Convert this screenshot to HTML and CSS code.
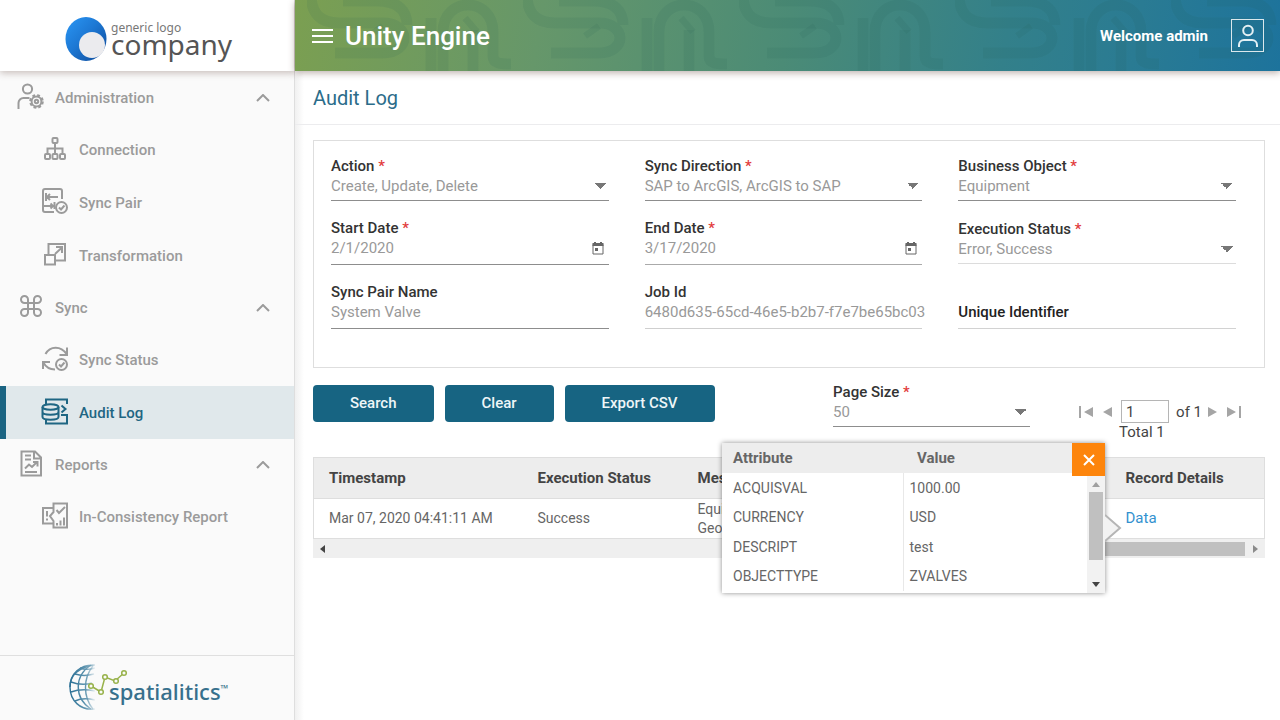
FILE: index.html
```html
<!DOCTYPE html>
<html lang="en">
<head>
<meta charset="utf-8">
<title>Unity Engine - Audit Log</title>
<link rel="stylesheet" href="styles.css">
</head>
<body>
<div class="app">
  <aside class="sidebar">
    <div class="brand">
      <svg class="brand-mark" viewBox="0 0 42 46" aria-hidden="true">
        <defs>
          <linearGradient id="orb" x1="0" y1="0" x2="1" y2="1">
            <stop offset="0" stop-color="#2a97f5"/><stop offset=".45" stop-color="#1d78d4"/><stop offset="1" stop-color="#0d4795"/>
          </linearGradient>
        </defs>
        <ellipse cx="21" cy="22" rx="20.500" ry="22" fill="url(#orb)"/>
        <circle cx="27" cy="28" r="13" fill="#ebebee"/>
      </svg>
      <div class="brand-text"><span class="brand-small">generic logo</span><span class="brand-big">company</span></div>
    </div>

    <nav class="nav">
      <button class="nav-head" type="button" aria-expanded="true">
        <svg class="icon" viewBox="0 0 28 28" aria-hidden="true"><circle cx="10.500" cy="5" r="4.600"/><path d="M1.500 25V19a5 5 0 0 1 5-5h6"/><circle cx="19.500" cy="17.500" r="6" stroke-width="2.600" stroke-dasharray="2.700 2"/><circle cx="19.500" cy="17.500" r="4.900"/><circle cx="19.500" cy="17.500" r="1.700"/></svg>
        <span>Administration</span>
        <svg class="chevron" viewBox="0 0 14 8" aria-hidden="true"><path d="M1 7l6-6 6 6"/></svg>
      </button>
      <a class="nav-item" href="#">
        <svg class="icon" viewBox="0 0 28 28" aria-hidden="true"><rect x="11.500" y="2" width="5" height="5" rx="1"/><rect x="4" y="18" width="5" height="5" rx="1"/><rect x="11.500" y="18" width="5" height="5" rx="1"/><rect x="19" y="18" width="5" height="5" rx="1"/><path d="M14 7v11M6.500 18v-5.500h15V18"/></svg>
        <span>Connection</span>
      </a>
      <a class="nav-item" href="#">
        <svg class="icon" viewBox="0 0 28 28" aria-hidden="true"><path d="M13 23H4a2 2 0 0 1-2-2V2a2 2 0 0 1 2-2h15a2 2 0 0 1 2 2v8M5 4v8M6 8h11M9 5L6 8l3 3M2 17h10M9.500 14.500L12 17l-2.500 2.500M13.500 13v7"/><circle cx="20.500" cy="18.500" r="5.500"/><path d="M18 18.500l2 2 3.500-4"/></svg>
        <span>Sync Pair</span>
      </a>
      <a class="nav-item" href="#">
        <svg class="icon" viewBox="0 0 28 28" aria-hidden="true"><path d="M7.500 12V2H24v16.500H14M4 13h10v9.500H4zM14 12l7-6.500M15 5h6v6"/></svg>
        <span>Transformation</span>
      </a>
      <button class="nav-head" type="button" aria-expanded="true">
        <svg class="icon" viewBox="0 0 28 28" aria-hidden="true"><path d="M11 9V5.500A3.500 3.500 0 1 0 7.500 9h13A3.500 3.500 0 1 0 17 5.500v13a3.500 3.500 0 1 0 3.500-3.500h-13A3.500 3.500 0 1 0 11 18.500z"/></svg>
        <span>Sync</span>
        <svg class="chevron" viewBox="0 0 14 8" aria-hidden="true"><path d="M1 7l6-6 6 6"/></svg>
      </button>
      <a class="nav-item" href="#">
        <svg class="icon" viewBox="0 0 28 28" aria-hidden="true"><path d="M4.500 8C9-.500 20-.500 25.500 8M26 1.500V9h-7.500M2 23v-7h7M2 16c3 5.500 7 7.500 12 7.500"/><circle cx="20.500" cy="18.500" r="5.500"/><path d="M18 18.500l2 2 3.500-4"/></svg>
        <span>Sync Status</span>
      </a>
      <a class="nav-item nav-item-active" href="#" aria-current="page">
        <svg class="icon" viewBox="0 0 28 28" aria-hidden="true"><path d="M5 5V.500h21V5M5 20v4.500h21V16h-6M20.500 6.500l4 3.500-4 3.500"/><ellipse cx="9.500" cy="8" rx="8" ry="2.800"/><path d="M1.500 8v10c0 3.600 16 3.600 16 0V8M1.500 13c0 3.600 16 3.600 16 0"/></svg>
        <span>Audit Log</span>
      </a>
      <button class="nav-head" type="button" aria-expanded="true">
        <svg class="icon" viewBox="0 0 28 28" aria-hidden="true"><path d="M4.500 .500H18l6 6v18H4.500zM17 1v6.500h6.500M8 4.500h6M8 8.500h6M8 21h12M8 17.500l4-4 3 2.500 5-5M16 11h4.500v4.500"/></svg>
        <span>Reports</span>
        <svg class="chevron" viewBox="0 0 14 8" aria-hidden="true"><path d="M1 7l6-6 6 6"/></svg>
      </button>
      <a class="nav-item" href="#">
        <svg class="icon" viewBox="0 0 28 28" aria-hidden="true"><path d="M12.500 5H2v15.500h10.500M12.500 9V.500H26v24H12.500V18L9 13zM6 8v5.500M6 15.500v2M15.500 7l2.500 3 6-6M16 22.500v-2.500M19.500 22.500v-5M23 22.500v-8"/></svg>
        <span>In-Consistency Report</span>
      </a>
    </nav>

    <footer class="vendor">
      <svg class="vendor-mark" viewBox="0 0 62 50" aria-hidden="true">
        <defs>
          <linearGradient id="fade" gradientUnits="userSpaceOnUse" x1="2" y1="0" x2="29" y2="0"><stop offset="0" stop-color="#286e94"/><stop offset=".6" stop-color="#5d93ae"/><stop offset="1" stop-color="#5d93ae" stop-opacity="0"/></linearGradient>
        </defs>
        <g fill="none" stroke="url(#fade)" stroke-width="1.400">
          <path d="M28 2C13 1 3 11 3 24s10 24 25 22"/><path d="M3 24c0-12 9-20 25-22"/>
          <path d="M24 2C7 13 7 35 24 46"/><path d="M26 3c-10 12-10 31 0 43"/>
          <path d="M8 11c6 2 12 2 19 0M4 19c8 3 14 3 21 1M4 29c8-3 15-3 24-1M8 38c6-3 12-3 20-1M13 5c5 2 9 2 15 0"/>
        </g>
        <g fill="#fafafa" stroke="#98b24b" stroke-width="1.500"><path fill="none" d="M24 23l10 6 4-15 10 4 9-8"/><circle cx="24" cy="23" r="2.300"/><circle cx="34" cy="29" r="2.300"/><circle cx="38" cy="14" r="2.300"/><circle cx="49" cy="18" r="2.300"/><circle cx="57" cy="10" r="2.300"/></g>
      </svg>
      <span class="vendor-name">spatialitics<sup class="vendor-tm">™</sup></span>
    </footer>
  </aside>

  <div class="content">
    <header class="topbar">
      <svg class="topbar-art" aria-hidden="true">
        <defs>
          <pattern id="pipes" width="216" height="71" patternUnits="userSpaceOnUse" x="12">
            <g fill="none" stroke="#1d5a4c" stroke-opacity=".1" stroke-width="11">
              <path d="M4-6c0 20 10 29 28 29h44c28 0 28 30 0 30H28M36 1h34c22 0 30 10 30 24M124 18v56M136 74V32c0-36 50-36 50 0v24c0 8 8 8 18 8M166 30v44"/>
              <path d="M62 36l14-10M158 18l12 14" stroke-width="7"/>
            </g>
          </pattern>
        </defs>
        <rect width="100%" height="100%" fill="url(#pipes)"/>
      </svg>
      <button class="menu-button" type="button" aria-label="Toggle menu"><svg viewBox="0 0 22 16" aria-hidden="true"><path d="M0 2h21M0 8h21M0 14h21"/></svg></button>
      <h1 class="app-title">Unity Engine</h1>
      <span class="welcome">Welcome admin</span>
      <button class="user-button" type="button" aria-label="User account"><svg viewBox="0 0 22 24" aria-hidden="true"><circle cx="11" cy="6.500" r="4.800"/><path d="M2 23v-2a5 5 0 0 1 5-5h8a5 5 0 0 1 5 5v2"/></svg></button>
    </header>

    <main class="page">
      <h2 class="page-title">Audit Log</h2>

      <form class="filters">
        <div class="field">
          <label for="action">Action <span class="req">*</span></label>
          <select id="action"><option>Create, Update, Delete</option></select>
        </div>
        <div class="field">
          <label for="direction">Sync Direction <span class="req">*</span></label>
          <select id="direction"><option>SAP to ArcGIS, ArcGIS to SAP</option></select>
        </div>
        <div class="field">
          <label for="object">Business Object <span class="req">*</span></label>
          <select id="object"><option>Equipment</option></select>
        </div>
        <div class="field field-tall">
          <label for="start">Start Date <span class="req">*</span></label>
          <div class="field-row"><input id="start" type="text" value="2/1/2020">
          <button class="date-button" type="button" aria-label="Pick start date"><svg viewBox="0 0 14 14" aria-hidden="true"><path class="cal-line" d="M2 3.500h10v9.500H2z"/><path class="cal-fill" d="M1.500 2h11v3h-11zM3 1h2v2H3zM9 1h2v2H9zM4 7h3v3H4z"/></svg></button></div>
        </div>
        <div class="field field-tall field-light">
          <label for="end">End Date <span class="req">*</span></label>
          <div class="field-row"><input id="end" type="text" value="3/17/2020">
          <button class="date-button" type="button" aria-label="Pick end date"><svg viewBox="0 0 14 14" aria-hidden="true"><path class="cal-line" d="M2 3.500h10v9.500H2z"/><path class="cal-fill" d="M1.500 2h11v3h-11zM3 1h2v2H3zM9 1h2v2H9zM4 7h3v3H4z"/></svg></button></div>
        </div>
        <div class="field field-pale">
          <label for="status">Execution Status <span class="req">*</span></label>
          <select id="status"><option>Error, Success</option></select>
        </div>
        <div class="field field-tall">
          <label for="pair">Sync Pair Name</label>
          <input id="pair" type="text" value="System Valve">
        </div>
        <div class="field field-tall field-job">
          <label for="job">Job Id</label>
          <input id="job" type="text" value="6480d635-65cd-46e5-b2b7-f7e7be65bc03">
        </div>
        <div class="field field-tall field-empty">
          <input id="uid" type="text" placeholder="Unique Identifier" aria-label="Unique Identifier">
        </div>
      </form>

      <div class="toolbar">
        <button class="btn" type="button">Search</button>
        <button class="btn" type="button">Clear</button>
        <button class="btn" type="button">Export CSV</button>
        <div class="field page-size">
          <label for="size">Page Size <span class="req">*</span></label>
          <select id="size"><option>50</option></select>
        </div>
        <div class="pager">
          <div class="pager-row">
            <button class="pager-button" type="button" aria-label="First page"><svg viewBox="0 0 14 12" aria-hidden="true"><path d="M0 0h2v12H0zM14 1v10L5 6z"/></svg></button>
            <button class="pager-button" type="button" aria-label="Previous page"><svg viewBox="0 0 14 12" aria-hidden="true"><path d="M12 1v10L3 6z"/></svg></button>
            <input class="pager-input" type="text" value="1" aria-label="Page number">
            <span class="pager-of">of 1</span>
            <button class="pager-button" type="button" aria-label="Next page"><svg viewBox="0 0 14 12" aria-hidden="true"><path d="M2 1v10l9-5z"/></svg></button>
            <button class="pager-button" type="button" aria-label="Last page"><svg viewBox="0 0 14 12" aria-hidden="true"><path d="M0 1v10l9-5zM12 0h2v12h-2z"/></svg></button>
          </div>
          <span class="pager-total">Total 1</span>
        </div>
      </div>

      <div class="results">
        <table class="log">
          <thead><tr><th class="col-time">Timestamp</th><th class="col-status">Execution Status</th><th>Message</th><th class="col-data">Record Details</th></tr></thead>
          <tbody><tr><td>Mar 07, 2020 04:41:11 AM</td><td>Success</td><td>Equipment<br>Geo</td><td><a class="data-link" href="#">Data</a></td></tr></tbody>
        </table>
        <div class="hscroll"><span class="arrow arrow-left"></span><span class="hthumb"></span><span class="arrow arrow-right"></span></div>

        <section class="popover" aria-label="Record details">
          <svg class="pointer" viewBox="0 0 18 30" aria-hidden="true"><path d="M0 2l15 13L0 28z" fill="#f2f2f2"/><path d="M0 2l15 13L0 28" fill="none" stroke="#b5b5b5" stroke-width="2"/></svg>
          <table class="attrs">
            <thead><tr><th class="col-attr">Attribute</th><th class="attr-value-head">Value</th></tr></thead>
            <tbody>
              <tr><td>ACQUISVAL</td><td>1000.00</td></tr>
              <tr><td>CURRENCY</td><td>USD</td></tr>
              <tr><td>DESCRIPT</td><td>test</td></tr>
              <tr><td>OBJECTTYPE</td><td>ZVALVES</td></tr>
            </tbody>
          </table>
          <div class="popover-side">
            <button class="close" type="button" aria-label="Close"><svg viewBox="0 0 12 12" aria-hidden="true"><path d="M1 1l10 10M11 1L1 11"/></svg></button>
            <div class="vscroll"><span class="arrow arrow-up"></span><span class="vthumb"></span><span class="arrow arrow-down"></span></div>
          </div>
        </section>
      </div>
    </main>
  </div>
</div>
</body>
</html>
```
FILE: styles.css
```css
* { box-sizing: border-box; }

body {
  margin: 0;
  font-family: Roboto, "Noto Sans", sans-serif;
  font-size: 15px;
  line-height: 20px;
  color: #555;
  background: #fff;
}

button, input, select {
  margin: 0;
  padding: 0;
  border: 0;
  background: none;
  font: inherit;
  color: inherit;
}

a { color: inherit; text-decoration: none; }
svg { display: block; }

.app {
  display: grid;
  grid-template-columns: 295px minmax(0, 1fr);
  min-height: 100vh;
}

/* Sidebar */
.sidebar {
  display: flex;
  flex-direction: column;
  background: #fafafa;
  border-right: 1px solid #dedede;
}

.brand {
  display: flex;
  align-items: center;
  gap: 4px;
  height: 71px;
  padding: 8px 0 0 65px;
  background: #fff;
  box-shadow: 0 2px 7px rgba(90, 60, 50, .32);
}

.brand-mark { width: 42px; height: 46px; }
.brand-text { display: flex; flex-direction: column; font-family: "Noto Sans", sans-serif; }
.brand-small { font-size: 12px; line-height: 12px; color: #777; }
.brand-big { font-size: 28px; line-height: 20px; padding-bottom: 3px; color: #555; }

.nav { padding-top: 1px; color: #9b9b9b; font-weight: 500; }

.nav-head, .nav-item {
  display: flex;
  align-items: center;
  width: 100%;
  text-align: left;
}

.nav-head { height: 51px; gap: 10px; padding: 0 24px 0 17px; }
.nav-item { height: 53px; gap: 10px; padding: 0 24px 0 41px; }
.nav-item-active {
  padding-left: 35px;
  border-left: 6px solid #1a6482;
  background: #e0e8eb;
  color: #1f6683;
}

.icon {
  width: 28px;
  height: 28px;
  overflow: visible;
  fill: none;
  stroke: currentColor;
  stroke-width: 2;
}

.chevron {
  width: 14px;
  height: 8px;
  margin-left: auto;
  fill: none;
  stroke: currentColor;
  stroke-width: 2;
}

.vendor {
  display: flex;
  align-items: center;
  height: 65px;
  margin-top: auto;
  padding-left: 67px;
  border-top: 1px solid #dfdfdf;
}

.vendor-mark { width: 62px; height: 50px; }
.vendor-name {
  margin: 6px 0 0 -20px;
  font-family: "Noto Sans", sans-serif;
  font-size: 22px;
  font-weight: 500;
  color: #37708c;
}
.vendor-tm { font-size: 10px; line-height: 10px; }

/* Top bar */
.content { display: flex; flex-direction: column; }

.topbar {
  position: relative;
  display: flex;
  align-items: center;
  height: 71px;
  padding: 0 16px 0 17px;
  color: #fff;
  background: linear-gradient(100deg, #7b9f51 0, #66976a 25%, #4b8b76 50%, #33808a 72%, #2a7b93 85%, #1d739c 100%);
  box-shadow: 0 2px 7px rgba(90, 60, 50, .4);
}

.topbar-art { position: absolute; inset: 0; width: 100%; height: 100%; }

.menu-button, .app-title, .welcome, .user-button { position: relative; }
.menu-button svg { width: 22px; height: 16px; stroke: #fff; stroke-width: 2; }
.app-title { margin: 0 auto 0 11px; font-size: 26px; line-height: 32px; font-weight: 500; }
.welcome { font-weight: 700; }
.user-button {
  display: grid;
  place-items: center;
  width: 33px;
  height: 33px;
  margin-left: 23px;
  border: 1px solid #dbe8ec;
}
.user-button svg { width: 22px; height: 24px; fill: none; stroke: #e4f0f4; stroke-width: 2; }

/* Page */
.page {
  flex: 1;
  padding: 0 15px 24px 18px;
  background: linear-gradient(90deg, #f0f0f0 0, #fff 9px);
}

.page-title {
  margin: 0 -15px 15px -18px;
  padding: 14px 18px 13px;
  border-bottom: 1px solid #ececee;
  font-size: 20px;
  line-height: 26px;
  font-weight: 400;
  color: #2b6c8a;
}

.filters {
  display: grid;
  grid-template-columns: repeat(3, minmax(0, 1fr));
  align-items: center;
  gap: 17px 36px;
  padding: 15px 28px 38px 17px;
  border: 1px solid #dedede;
}

.field {
  display: flex;
  flex-direction: column;
  padding-bottom: 4px;
  border-bottom: 1px solid #8d8d8d;
  color: #999;
}
.field label { color: #333; font-weight: 500; }
.field-tall { padding-bottom: 6px; }
.field-light { border-bottom-color: #aaa; }
.field-pale { border-bottom-color: #dcdcdc; }
.field-job { border-bottom-color: #cfcfcf; }
.field-empty { align-self: end; border-bottom-color: #d2d2d2; }
.field-empty input::placeholder { color: #222; font-weight: 500; opacity: 1; }
.req { color: #e23c3c; }

.field input, .field select { width: 100%; min-width: 0; height: 20px; }
.field.field-job input { width: calc(100% + 8px); }
.field select {
  appearance: none;
  padding-right: 24px;
  background:
    linear-gradient(to top right, transparent 50%, #777 50%) right 9px center / 6px 6px no-repeat,
    linear-gradient(to top left, transparent 50%, #777 50%) right 3px center / 6px 6px no-repeat;
}
.field-row { display: flex; align-items: center; }
.date-button { margin-right: 4px; }
.date-button svg { width: 14px; height: 14px; }
.cal-line { fill: none; stroke: #666; stroke-width: 1; }
.cal-fill { fill: #666; }

/* Toolbar */
.toolbar { display: flex; align-items: flex-start; gap: 11px; margin-top: 14px; }
.btn {
  height: 37px;
  margin-top: 3px;
  padding: 0 37px 2px;
  border-radius: 4px;
  background: #176482;
  color: #eef6f8;
  font-weight: 500;
}
.page-size { width: 197px; margin-left: auto; }
.pager { display: flex; flex-direction: column; margin: 18px 21px 0 38px; color: #444; }
.pager-row { display: flex; align-items: center; gap: 4px; }
.pager-button svg { width: 14px; height: 12px; fill: #a5a5a5; }
.pager-button { width: 17px; }
.pager-input { width: 48px; height: 23px; padding: 0 4px; border: 1px solid #b5b5b5; }
.pager-of { padding-left: 3px; }
.pager-total { padding-left: 40px; line-height: 18px; }

/* Results */
.results { position: relative; margin-top: 16px; }
.log { width: 100%; table-layout: fixed; border-collapse: collapse; border: 1px solid #dedede; }
.log th { height: 41px; padding: 0 0 0 15px; background: #ededed; text-align: left; font-weight: 700; color: #444; }
.log td { height: 40px; padding: 0 0 0 15px; border-top: 1px solid #dedede; font-size: 14px; line-height: 19px; color: #666; }
.col-time { width: 209px; }
.col-status { width: 160px; }
.col-data { width: 154px; }
.data-link { color: #3391cf; font-size: 15px; }

.hscroll { display: flex; align-items: center; height: 19px; padding: 0 7px; background: #efefef; }
.hthumb { width: 250px; height: 14px; margin: 0 8px 0 auto; background: #c0c0c0; }

.arrow { width: 0; height: 0; border: 4px solid transparent; }
.arrow-left { border-left: 0; border-right: 5px solid #444; }
.arrow-right { border-right: 0; border-left: 5px solid #8b8b8b; }
.arrow-up { border-top: 0; border-bottom: 5px solid #a0a0a0; }
.arrow-down { border-bottom: 0; border-top: 5px solid #444; }

.popover {
  position: absolute;
  top: -14px;
  right: 160px;
  width: 383px;
  height: 150px;
  background: #fff;
  box-shadow: 0 0 5px rgba(0, 0, 0, .45);
}
.pointer { position: absolute; left: 100%; top: 70px; width: 18px; height: 30px; }
.attrs { width: 100%; table-layout: fixed; border-collapse: collapse; color: #666; }
.attrs th { height: 30px; padding: 0 11px; background: #ededed; text-align: left; font-weight: 700; }
.attrs td { height: 29px; padding: 0 6px 0 11px; font-size: 14px; }
.attrs tr:nth-child(even) td { height: 30px; }
.attrs td + td { padding-left: 6px; border-left: 1px solid #e8e8e8; }
.attrs .attr-value-head { padding-left: 14px; }
.col-attr { width: 181px; }

.popover-side {
  position: absolute;
  inset: 0 0 0 auto;
  display: flex;
  flex-direction: column;
  align-items: flex-end;
}
.close { display: grid; place-items: center; width: 33px; height: 33px; background: #fd850c; }
.close svg { width: 12px; height: 12px; stroke: #fff; stroke-width: 2; }
.vscroll {
  display: flex;
  flex: 1;
  flex-direction: column;
  align-items: center;
  width: 18px;
  padding: 6px 0;
  background: #f2f2f2;
}
.vthumb { width: 14px; height: 68px; margin: 5px 0 auto; background: #c0c0c0; }
```
